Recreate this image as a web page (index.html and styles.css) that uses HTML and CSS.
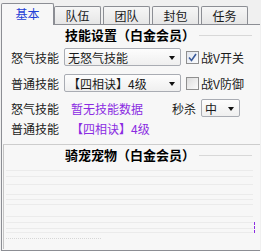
FILE: index.html
```html
<!DOCTYPE html>
<html>
<head>
<meta charset="utf-8">
<link rel="stylesheet" href="styles.css">
</head>
<body>
<div class="tabs">
  <div class="tab sel">基本</div>
  <div class="tab first">队伍</div>
  <div class="tab">团队</div>
  <div class="tab">封包</div>
  <div class="tab">任务</div>
</div>
<div class="panel">
  <div class="sec-title"><span class="t">技能设置（白金会员）</span><span class="rule"></span></div>
  <div class="row r1">
    <span class="lbl">怒气技能</span>
    <div class="combo"><span class="val">无怒气技能</span><span class="arrow"></span></div>
    <span class="chk on"><svg width="9" height="9" viewBox="0 0 9 9"><path d="M1 4.5 L3.5 7.5 L8 1" fill="none" stroke="#3a5a9a" stroke-width="1.6"/></svg></span>
    <span class="chk-lbl">战V开关</span>
  </div>
  <div class="row r2">
    <span class="lbl">普通技能</span>
    <div class="combo"><span class="val">【四相诀】4级</span><span class="arrow"></span></div>
    <span class="chk"></span>
    <span class="chk-lbl">战V防御</span>
  </div>
  <div class="row r3">
    <span class="lbl">怒气技能</span>
    <span class="info">暂无技能数据</span>
    <span class="kill">秒杀</span>
    <div class="combo small"><span class="val">中</span><span class="arrow"></span></div>
  </div>
  <div class="row r4">
    <span class="lbl">普通技能</span>
    <span class="info">【四相诀】4级</span>
  </div>
  <div class="group">
    <div class="sec-title g"><span class="t">骑宠宠物（白金会员）</span><span class="rule"></span></div>
    <div class="list">
      <div class="ln" style="top:4px"></div>
      <div class="ln" style="top:10px"></div>
      <div class="ln" style="top:18px"></div>
      <div class="ln" style="top:28px"></div>
      <div class="ln" style="top:33px"></div>
      <div class="ln" style="top:38px"></div>
      <div class="ln" style="top:50px"></div>
      <div class="ln" style="top:56px"></div>
      <div class="ln" style="top:62px"></div>
      <div class="ln" style="top:66px"></div>
      <span class="mark"></span>
      <div class="dots"></div>
    </div>
  </div>
</div>
</body>
</html>
```
FILE: styles.css
```css
* { box-sizing: border-box; }
html, body { margin: 0; padding: 0; }
body {
  width: 261px;
  height: 251px;
  overflow: hidden;
  background: #f0f0f0;
  font-family: "Noto Sans CJK SC", "Noto Sans", sans-serif;
  font-size: 12px;
  color: #1a1a1a;
}
.tabs {
  display: flex;
  align-items: flex-end;
  height: 24px;
  padding-left: 1px;
  position: relative;
  z-index: 2;
}
.tab {
  width: 47px;
  height: 18px;
  margin-left: 2px;
  border: 1px solid #8c8e94;
  border-bottom: none;
  border-radius: 2px 2px 0 0;
  background: linear-gradient(#f6f6f6, #e6e6e6);
  display: flex;
  justify-content: center;
  align-items: center;
  line-height: 12px;
  padding-top: 1px;
}
.tab.first { margin-left: 0; }
.tab.sel {
  width: 53px;
  height: 22px;
  margin-left: 0;
  margin-bottom: -1px;
  background: #f7f7f7;
  color: #1f3fd6;
  align-items: flex-start;
  padding-top: 4px;
}
.panel {
  height: 227px;
  margin-left: 1px;
  margin-right: 1px;
  border: 1px solid #8c8e94;
  border-right: none;
  background: #f7f7f7;
}
.sec-title {
  height: 18px;
  display: flex;
  align-items: center;
  padding-left: 63px;
  font-weight: bold;
  font-size: 13px;
  color: #000;
}
.sec-title .t { white-space: nowrap; }
.sec-title .rule {
  flex: 1;
  height: 1px;
  margin: 2px 8px 0 4px;
  background: #d8d8d8;
}
.row {
  display: flex;
  align-items: center;
  height: 18px;
  padding-left: 9px;
}
.r1 { margin-top: 5px; }
.r2 { margin-top: 8px; }
.r3 { margin-top: 7px; }
.r4 { margin-top: 2px; }
.lbl { width: 48px; white-space: nowrap; }
.combo {
  position: relative;
  width: 117px;
  height: 18px;
  margin-left: 5px;
  border: 1px solid #a9acb3;
  border-radius: 2px;
  background: linear-gradient(#fdfdfd, #efefef);
  display: flex;
  align-items: center;
  padding-left: 3px;
  white-space: nowrap;
}
.arrow {
  position: absolute;
  right: 5px;
  top: 7px;
  width: 0;
  height: 0;
  border-left: 3.5px solid transparent;
  border-right: 3.5px solid transparent;
  border-top: 4px solid #111;
}
.combo.small {
  width: 39px;
  margin-left: 5px;
}
.chk {
  width: 13px;
  height: 13px;
  margin-left: 5px;
  border: 1px solid #8f8f8f;
  background: linear-gradient(135deg, #dcdcdc, #fbfbfb);
  display: flex;
  align-items: center;
  justify-content: center;
}
.chk.on { background: linear-gradient(135deg, #e2e6ee, #fafbfd); }
.chk-lbl { margin-left: 2px; white-space: nowrap; }
.info { margin-left: 12px; color: #8a2be2; white-space: nowrap; width: 101px; }
.kill { white-space: nowrap; }
.group {
  margin-top: 7px;
  margin-left: 1px;
  height: 105px;
  border-top: 1px solid #cdcdcd;
  border-left: 1px solid #c4c4c4;
}
.sec-title.g { padding-left: 61px; }
.list {
  position: relative;
  margin: 3px 7px 0 2px;
  height: 80px;
}
.ln {
  position: absolute;
  left: 0;
  right: 0;
  height: 1px;
  background: #ebebeb;
}
.mark {
  position: absolute;
  right: -2px;
  top: 56px;
  width: 1px;
  height: 11px;
  border-left: 1px dashed #8a2be2;
}
.dots {
  position: absolute;
  left: 0;
  top: 72px;
  width: 95px;
  height: 2px;
  border-top: 1px dotted #d6d6d6;
}
```
